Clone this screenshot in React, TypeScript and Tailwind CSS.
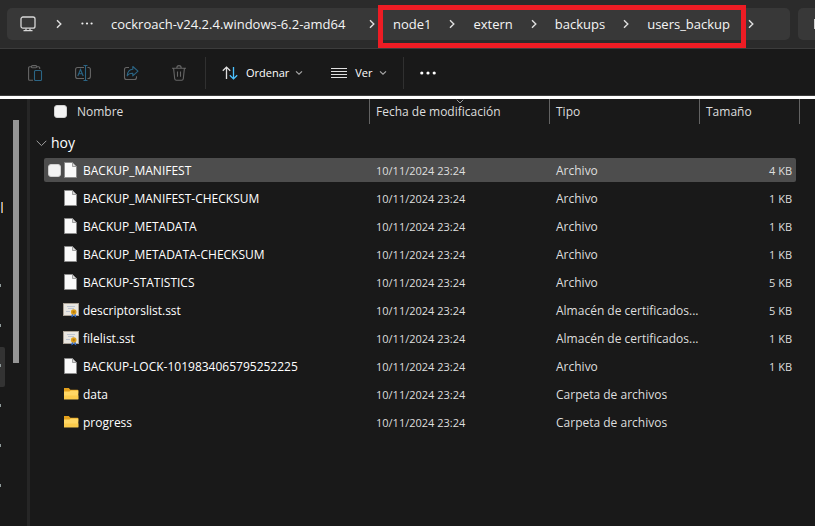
import React from "react";

type Kind = "file" | "cert" | "folder";

interface Entry {
  name: string;
  kind: Kind;
  type: string;
  size: string;
  hovered?: boolean;
}

const modified = "10/11/2024 23:24";

const entries: Entry[] = [
  { name: "BACKUP_MANIFEST", kind: "file", type: "Archivo", size: "4 KB", hovered: true },
  { name: "BACKUP_MANIFEST-CHECKSUM", kind: "file", type: "Archivo", size: "1 KB" },
  { name: "BACKUP_METADATA", kind: "file", type: "Archivo", size: "1 KB" },
  { name: "BACKUP_METADATA-CHECKSUM", kind: "file", type: "Archivo", size: "1 KB" },
  { name: "BACKUP-STATISTICS", kind: "file", type: "Archivo", size: "5 KB" },
  { name: "descriptorslist.sst", kind: "cert", type: "Almacén de certificados...", size: "5 KB" },
  { name: "filelist.sst", kind: "cert", type: "Almacén de certificados...", size: "1 KB" },
  { name: "BACKUP-LOCK-1019834065795252225", kind: "file", type: "Archivo", size: "1 KB" },
  { name: "data", kind: "folder", type: "Carpeta de archivos", size: "" },
  { name: "progress", kind: "folder", type: "Carpeta de archivos", size: "" },
];

function FileIcon() {
  return (
    <svg width="16" height="16" viewBox="0 0 16 16" aria-hidden="true">
      <path d="M1.5 0.5h8l4 4v11h-12z" fill="#fafafa" stroke="#8c8c8c" />
      <path d="M9.5 0.5v4h4z" fill="#d8d8d8" stroke="#8c8c8c" strokeWidth="0.8" />
    </svg>
  );
}

function CertIcon() {
  return (
    <svg width="16" height="16" viewBox="0 0 16 16" aria-hidden="true">
      <rect x="0.5" y="1.5" width="15" height="12" fill="#e9e6e0" stroke="#aaa195" />
      <path d="M4 4.5h8M5 6.5h6M3 9.5h4" stroke="#bcc4d0" />
      <path d="M9 11l-0.7 4.6 1.8-1 0.4-2.6zM12.4 11l0.9 4.6-1.8-1-0.5-2.6z" fill="#2d6bd0" />
      <circle cx="10.7" cy="10" r="2.8" fill="#dda01c" />
      <circle cx="10.7" cy="10" r="1.2" fill="#b87a0c" />
    </svg>
  );
}

function FolderIcon() {
  return (
    <svg width="16" height="16" viewBox="0 0 16 16" aria-hidden="true">
      <path d="M1 2h4.8l1.6 1.7h7.1q0.8 0 0.8 0.8v3H1z" fill="#e3a01c" />
      <path d="M1 5.5h5.4l1.3-1h7.6v8.8H1z" fill="#ffd765" />
      <path d="M1 9.5h14.3v3.8H1z" fill="#fbcb4c" />
    </svg>
  );
}

function KindIcon({ kind }: { kind: Kind }) {
  if (kind === "cert") return <CertIcon />;
  if (kind === "folder") return <FolderIcon />;
  return <FileIcon />;
}

function CrumbChevron() {
  return (
    <svg width="6" height="10" viewBox="0 0 6 10" fill="none" stroke="#e0e0e0" strokeWidth="1.4" aria-hidden="true">
      <path d="M1 1.2l3.8 3.8L1 8.8" />
    </svg>
  );
}

function SmallDown() {
  return (
    <svg width="8" height="6" viewBox="0 0 8 6" fill="none" stroke="#a8a8a8" strokeWidth="1.2" aria-hidden="true">
      <path d="M1 1.4l3 2.8 3-2.8" />
    </svg>
  );
}

function Separator() {
  return (
    <span className="flex w-[42px] shrink-0 justify-center">
      <CrumbChevron />
    </span>
  );
}

function AddressBar() {
  return (
    <header className="flex h-12 items-center gap-2 bg-[#2b2b2b] pl-[7px]">
      <nav
        aria-label="Ruta"
        className="flex h-8 min-w-0 flex-1 items-center rounded-[5px] bg-[#383838] pl-[13px] text-[13px] leading-5 text-[#f5f5f5]"
      >
        <button type="button" aria-label="Este equipo" className="shrink-0">
          <svg width="16" height="16" viewBox="0 0 16 16" fill="none" stroke="#d8d8d8" strokeWidth="1.3" aria-hidden="true">
            <rect x="1" y="1" width="14" height="11.2" rx="2" />
            <path d="M6 12.5v2M10 12.5v2M3.5 14.6h9" />
          </svg>
        </button>
        <span className="flex w-[45px] shrink-0 justify-center">
          <CrumbChevron />
        </span>
        <button type="button" aria-label="Más carpetas" className="shrink-0">
          <svg width="12" height="4" viewBox="0 0 12 4" fill="#f0f0f0" aria-hidden="true">
            <circle cx="1.4" cy="1.5" r="1.1" />
            <circle cx="6" cy="1.5" r="1.1" />
            <circle cx="10.6" cy="1.5" r="1.1" />
          </svg>
        </button>
        <button type="button" className="ml-[18px] min-w-60 text-left whitespace-nowrap">cockroach-v24.2.4.windows-6.2-amd64</button>
        <Separator />
        <span className="relative flex items-center">
          <button type="button">node1</button>
          <Separator />
          <button type="button">extern</button>
          <Separator />
          <button type="button">backups</button>
          <Separator />
          <button type="button">users_backup</button>
          <span className="pointer-events-none absolute -top-[9px] -right-4 -left-[15px] h-[43px] border-[5px] border-[#ed1c24]" />
        </span>
        <Separator />
      </nav>
      <div className="flex h-8 w-[17px] shrink-0 items-center justify-end rounded-l-[5px] bg-[#383838]">
        <span className="h-2.5 w-px bg-[#d0d0d0]" />
      </div>
    </header>
  );
}

function Toolbar() {
  return (
    <div
      role="toolbar"
      aria-label="Acciones"
      className="flex h-12 items-center border-t border-b border-t-[#3c3c3c] border-b-[#3c3c3c] bg-[#191919] pt-0.5 pl-[27px] text-[11px] leading-4 text-white"
    >
      <div className="flex gap-8">
        <button type="button" aria-label="Pegar">
          <svg width="16" height="16" viewBox="0 0 16 16" fill="none" stroke="#666666" strokeWidth="1.1" aria-hidden="true">
            <path d="M4.4 1.7H2.6q-1 0-1 1v11.6q0 1 1 1H6M9.8 1.7h1.9q1 0 1 1v1.4" />
            <rect x="4.4" y="0.6" width="5.4" height="2.2" rx="1.1" />
            <rect x="7.5" y="5.5" width="7" height="10" rx="1" stroke="#2b6585" />
          </svg>
        </button>
        <button type="button" aria-label="Cambiar nombre">
          <svg width="16" height="16" viewBox="0 0 16 16" fill="none" stroke="#666666" strokeWidth="1.1" aria-hidden="true">
            <path d="M9 2.5H2.6q-2 0-2 2v7q0 2 2 2H9M12.5 2.5h0.9q2 0 2 2v7q0 2-2 2h-0.9" />
            <path d="M8.5 0.5h4M10.5 0.5v15M8.5 15.5h4" stroke="#2b6585" />
            <path d="M2.8 11l2.7-6.5L8.2 11M3.8 8.8h3.4" stroke="#2b6585" />
          </svg>
        </button>
        <button type="button" aria-label="Compartir">
          <svg width="16" height="16" viewBox="0 0 16 16" fill="none" stroke="#666666" strokeWidth="1.1" strokeLinejoin="round" aria-hidden="true">
            <path d="M6 2.5H3.5q-2 0-2 2v8q0 2 2 2h8q2 0 2-2v-1.3" />
            <path d="M9.8 1.5l5.2 4.7-5.2 4.6V8.2Q6 8 4.2 10.8 4.6 4.6 9.8 4.2z" stroke="#2b6585" />
          </svg>
        </button>
        <button type="button" aria-label="Eliminar">
          <svg width="16" height="16" viewBox="0 0 16 16" fill="none" stroke="#666666" strokeWidth="1.1" aria-hidden="true">
            <path d="M1 3.2h14M5.8 3q0-2.4 2.2-2.4T10.2 3M2.6 3.4l1.1 10.3q0.2 1.6 1.6 1.6h5.4q1.4 0 1.6-1.6l1.1-10.3M6.5 6.4v5.4M9.5 6.4v5.4" />
          </svg>
        </button>
      </div>
      <span className="ml-[18px] h-8 w-px bg-[#303030]" />
      <button type="button" className="ml-4 flex items-center gap-1.5">
        <svg className="mr-0.5" width="16" height="14" viewBox="0 0 16 14" fill="none" strokeWidth="1.3" aria-hidden="true">
          <path d="M4.5 13V1.2M0.8 4.8l3.7-3.7 3.7 3.7" stroke="#e0e0e0" />
          <path d="M11.5 1v11.8M7.8 9.2l3.7 3.7 3.7-3.7" stroke="#4cc2ff" />
        </svg>
        <span>Ordenar</span>
        <SmallDown />
      </button>
      <button type="button" className="ml-7 flex items-center gap-1.5">
        <svg className="mr-0.5" width="16" height="12" viewBox="0 0 16 12" stroke="#e0e0e0" aria-hidden="true">
          <path d="M0 1.5h16M0 4.5h16M0 7.5h16M0 10.5h16" />
        </svg>
        <span>Ver</span>
        <SmallDown />
      </button>
      <span className="ml-4 h-8 w-px bg-[#303030]" />
      <button type="button" aria-label="Ver más" className="ml-4">
        <svg width="16" height="4" viewBox="0 0 16 4" fill="#ffffff" aria-hidden="true">
          <circle cx="1.8" cy="2" r="1.6" />
          <circle cx="8" cy="2" r="1.6" />
          <circle cx="14.2" cy="2" r="1.6" />
        </svg>
      </button>
    </div>
  );
}

function Sidebar() {
  return (
    <aside className="flex w-[27px] shrink-0 justify-between">
      <div className="w-[5px] pt-[103px]">
        <div className="ml-px h-[11px] w-0.5 border-l border-[#6a9ad0] bg-[#e09a3c]" />
        <ul className="mt-[54px]">
          {[0, 1, 2, 3, 4, 5].map((n) => (
            <li
              key={n}
              className={n === 2 ? "flex h-10 items-center rounded-r-xs bg-[#333333] pb-1" : "flex h-10 items-center pb-1"}
            >
              <span className="h-[3px] w-px bg-[#8f9a9a]" />
            </li>
          ))}
        </ul>
      </div>
      <div className="mt-[21px] mr-2 h-[243px] w-1.5 bg-[#959595]" />
    </aside>
  );
}

function HeaderCell({ children }: { children: React.ReactNode }) {
  return (
    <th scope="col" className="border-l border-[#636363] px-1.5 text-left font-normal last:border-r">
      {children}
    </th>
  );
}

const box = "block size-[13px] shrink-0 appearance-none rounded-[3px] border border-[#d0d0d0] bg-[#f3f3f3]";

function FileTable() {
  return (
    <table className="w-full table-fixed border-separate border-spacing-0 text-xs text-[#dedede]">
      <colgroup>
        <col />
        <col className="w-[180px]" />
        <col className="w-[150px]" />
        <col className="w-[101px]" />
      </colgroup>
      <thead>
        <tr className="h-[25px]">
          <th scope="col" className="p-0 text-left font-normal">
            <div className="flex items-center gap-2.5 pl-6">
              <input type="checkbox" aria-label="Seleccionar todo" className={box} />
              Nombre
            </div>
          </th>
          <HeaderCell>
            <span className="relative">
              Fecha de modificación
              <svg className="absolute -top-1 left-20" width="8" height="5" viewBox="0 0 8 5" fill="none" stroke="#9a9a9a" aria-hidden="true">
                <path d="M0.8 0.8L4 4l3.2-3.2" />
              </svg>
            </span>
          </HeaderCell>
          <HeaderCell>Tipo</HeaderCell>
          <HeaderCell>Tamaño</HeaderCell>
        </tr>
      </thead>
      <tbody>
        <tr className="h-8">
          <th scope="rowgroup" colSpan={4} className="p-0 text-left text-sm font-normal text-white">
            <button type="button" className="flex items-center gap-1 pt-1.5 pl-1.5">
              <svg width="11" height="7" viewBox="0 0 11 7" fill="none" stroke="#a0a0a0" aria-hidden="true">
                <path d="M0.7 0.8l4.8 4.8 4.8-4.8" />
              </svg>
              hoy
            </button>
          </th>
        </tr>
        {entries.map((e) => {
          const fill = e.hovered ? "bg-[#4d4d4d]" : "";
          return (
            <tr key={e.name} className="h-7">
              <td className="p-0 pl-3.5">
                <div className={`flex h-6 items-center rounded-l-xs pl-1 ${fill}`}>
                  <span className="w-[15px] shrink-0">
                    {e.hovered && <input type="checkbox" aria-label={e.name} className={box} />}
                  </span>
                  <KindIcon kind={e.kind} />
                  <span className="ml-1 pt-0.5 whitespace-nowrap text-white">{e.name}</span>
                </div>
              </td>
              <td className="p-0">
                <div className={`h-6 pl-[7px] text-[11px] leading-[26px] ${fill}`}>{modified}</div>
              </td>
              <td className="p-0">
                <div className={`h-6 pl-[7px] leading-[26px] whitespace-nowrap ${fill}`}>{e.type}</div>
              </td>
              <td className="p-0 pr-1">
                <div className={`h-6 rounded-r-xs pr-1 text-right text-[11px] leading-[26px] ${fill}`}>{e.size}</div>
              </td>
            </tr>
          );
        })}
      </tbody>
    </table>
  );
}

export default function App() {
  return (
    <div className="flex min-h-screen flex-col overflow-hidden bg-[#191919] font-['Open_Sans','Noto_Sans',sans-serif]">
      <AddressBar />
      <Toolbar />
      <main className="flex flex-1 border-t-[3px] border-white">
        <Sidebar />
        <section aria-label="Archivos" className="min-w-0 flex-1 border-l-[3px] border-[#262626] pr-[15px]">
          <FileTable />
        </section>
      </main>
    </div>
  );
}
